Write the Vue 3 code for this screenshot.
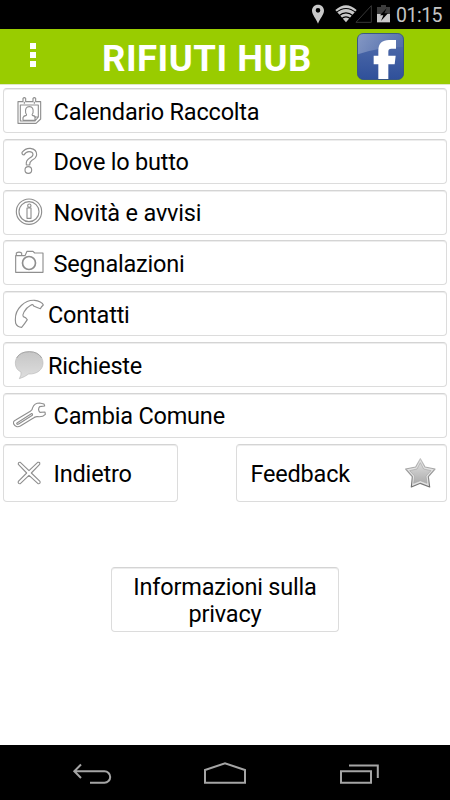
<script setup>
const items = [
  { icon: 'calendar', label: 'Calendario Raccolta', box: '39 204 102 132' },
  { icon: 'question', label: 'Dove lo butto', box: '39 12 102 132' },
  { icon: 'info', label: 'Novità e avvisi', box: '39 165 102 132' },
  { icon: 'camera', label: 'Segnalazioni', box: '39 18 102 132' },
  { icon: 'phone', label: 'Contatti', box: '39 170 102 132', tight: true },
  { icon: 'bubble', label: 'Richieste', box: '39 14 102 132', tight: true },
  { icon: 'wrench', label: 'Cambia Comune', box: '39 165 102 132' },
]
</script>

<template>
  <div class="screen">
    <div class="status">
      <svg class="status-icons" viewBox="30 0 250 84">
        <path fill="#c9c9c9" fill-rule="evenodd" d="M54 14c-11 0-18 8-18 18 0 12 13 24 18 39 5-15 18-27 18-39 0-10-7-18-18-18zm0 10a7 7 0 1 1 0 14 7 7 0 0 1 0-14z" />
        <path fill="#c9c9c9" d="M106 30Q138 2 170 30L138 67z" />
        <g fill="none" stroke="#000" stroke-width="3.5">
          <path d="M108 38Q138 13 168 38M116 48Q138 29 160 48M124 56Q138 45 152 56" />
        </g>
        <path fill="none" stroke="#424242" stroke-width="2.5" d="M168 67L214 17V67z" />
        <path fill="#3d3d3d" d="M243 15h15v6h12v24h-39V21h12z" />
        <path fill="#c9c9c9" d="M231 42h39v25h-39z" />
        <path fill="#000" d="M260 25L240 46h10L243 63L264 40h-11z" />
      </svg>
      <span class="clock">01:15</span>
    </div>

    <header class="bar">
      <div class="dots"><i></i><i></i><i></i></div>
      <h1>RIFIUTI HUB</h1>
      <svg class="fb" viewBox="0 0 141 141">
        <defs>
          <linearGradient id="fbg" x1="0" y1="0" x2="0" y2="1">
            <stop offset="0" stop-color="#5570ad" />
            <stop offset="1" stop-color="#2f509a" />
          </linearGradient>
          <linearGradient id="gloss" x1="0" y1="0" x2="1" y2="0">
            <stop offset="0" stop-color="#fff" stop-opacity=".28" />
            <stop offset="1" stop-color="#fff" stop-opacity=".04" />
          </linearGradient>
        </defs>
        <rect x="1.5" y="1.5" width="138" height="138" rx="17" fill="url(#fbg)" stroke="#2f4c8c" stroke-width="2.5" />
        <path fill="url(#gloss)" d="M3 19Q3 3 19 3H122Q138 3 138 19V42Q60 43 3 64z" />
        <path fill="#fff" d="M64 138V94H50V68H64V52C64 31 76 21 96 21H117V47H103C96 47 94 50 94 56V68H116L113 94H94V138z" />
      </svg>
    </header>

    <main>
      <nav class="menu">
        <button v-for="item in items" :key="item.icon" class="btn row" :class="{ tight: item.tight }">
          <svg class="icon" :viewBox="item.box">
            <g v-if="item.icon === 'calendar'" class="line">
              <path d="M54 242H69V232Q73 228 77 232V242H99V232Q103 228 107 232V242H122V294L108 307H54z" />
              <path d="M61 252H115V288H105V300H61zM73 242V248M103 242V248M105 300L115 288" />
              <path d="M69 298V290Q71 284 79 283Q81 281 77 276Q74 257 88 257Q102 257 99 276Q95 281 97 283Q105 284 107 290M69 298H105" />
            </g>
            <g v-else-if="item.icon === 'question'" class="line">
              <path d="M66 52Q76 39 91 40Q111 43 110 60Q108 70 96 76Q89 80 89 90H79Q77 77 88 70Q99 65 99 58Q98 50 87 50Q78 50 72 60Q65 59 66 52z" />
              <circle cx="85" cy="105" r="10" />
            </g>
            <g v-else-if="item.icon === 'info'" class="line">
              <circle cx="87" cy="230" r="38" />
              <circle cx="87" cy="230" r="30" />
              <circle cx="88" cy="212" r="5" />
              <path d="M81 219H93V250H81z" />
            </g>
            <g v-else-if="item.icon === 'camera'" class="line">
              <path d="M47 112V62H75L81 49H99L104 54H129V112zM49 62V54Q57 49 65 54V62M75 62H68" />
              <circle cx="87" cy="84" r="19.5" class="lens" />
            </g>
            <g v-else-if="item.icon === 'phone'" class="line">
              <path d="M46 253C45 219 76 193 104 195C116 196 128 203 130 209Q124 214 121 220Q108 216 101 212Q98 205 92 210Q79 217 72 230Q67 239 70 244Q78 246 82 253Q73 267 65 276Q52 276 47 264z" />
            </g>
            <g v-else-if="item.icon === 'bubble'">
              <defs>
                <linearGradient id="bub" x1="0" y1="0" x2="0" y2="1">
                  <stop offset="0" stop-color="#c6c6c6" />
                  <stop offset="1" stop-color="#dedede" />
                </linearGradient>
              </defs>
              <path fill="url(#bub)" stroke="#b9b9b9" stroke-width="2" d="M88 40C112 40 129 54 129 74C129 94 111 108 86 107Q74 116 58 121Q65 110 63 101C52 96 46 87 46 74C46 54 63 40 88 40z" />
              <path fill="none" stroke="#929292" stroke-width="2" d="M50 59Q60 40 88 40Q114 40 125 59" />
            </g>
            <g v-else class="line">
              <path d="M40 256Q39 250 47 246L91 220Q97 217 98 209Q103 195 119 195L132 198L134 204L119 206Q112 215 120 223L135 222L136 229Q128 238 113 236Q105 235 99 241L61 264Q48 271 40 256z" />
              <path d="M52 254L94 227Q99 226 97 232L57 257Q51 261 50 257z" />
            </g>
          </svg>
          <span>{{ item.label }}</span>
        </button>
      </nav>

      <div class="pair">
        <button class="btn back">
          <svg class="icon" viewBox="39 27 102 174">
            <path class="line" d="M61 82L87 107L113 82Q121 80 119 88L94 114L120 139Q122 147 114 146L87 121L61 146Q53 147 55 139L80 114L55 88Q54 81 61 82z" />
          </svg>
          <span>Indietro</span>
        </button>
        <button class="btn feedback">
          <span>Feedback</span>
          <svg class="star" viewBox="537 66 99 99">
            <defs>
              <linearGradient id="st" x1="0" y1="0" x2="0" y2="1">
                <stop offset="0" stop-color="#dcdcdc" />
                <stop offset="1" stop-color="#adadad" />
              </linearGradient>
              <linearGradient id="edge" x1="0" y1="0" x2="0" y2="1">
                <stop offset="0" stop-color="#c4c4c4" />
                <stop offset="1" stop-color="#6f6f6f" />
              </linearGradient>
            </defs>
            <path fill="#e2e2e2" stroke="url(#edge)" stroke-width="3.5" stroke-linejoin="round" d="M586 71L600 96L630 102L610 125L614 156L586 145L559 156L562 125L542 102L572 96z" />
            <path fill="url(#st)" stroke="#a8a8a8" stroke-width="2" stroke-linejoin="round" d="M586 83L596 102L618 107L603 123L606 145L586 137L566 145L569 123L554 107L576 102z" />
          </svg>
        </button>
      </div>

      <button class="btn privacy">Informazioni sulla<br />privacy</button>
    </main>

    <footer class="nav">
      <svg viewBox="0 0 450 55">
        <g fill="none" stroke="#a5a5a5" stroke-width="2">
          <path d="M81 19.5L74.3 26.3L81 33M75 26.3H104.5A5.7 5.7 0 0 1 104.5 37.7H90" />
          <path d="M205 37.8V25L225 18.4L245 25V37.8z" />
          <path d="M341 26.3H371V37.8H341zM349 20.5H377.8V33" />
        </g>
      </svg>
    </footer>
  </div>
</template>

<style>
body {
  margin: 0;
}
</style>

<style scoped>
.screen {
  width: 450px;
  height: 800px;
  display: flex;
  flex-direction: column;
  background: #fff;
  font-family: Roboto, sans-serif;
  color: #000;
  overflow: hidden;
}
.status {
  height: 29px;
  flex: none;
  background: #000;
  display: flex;
  align-items: flex-start;
  justify-content: flex-end;
  padding-right: 7px;
  box-sizing: border-box;
}
.status-icons {
  width: 83.33px;
  height: 28px;
  margin-right: 3px;
}
.clock {
  width: 47px;
  font-size: 19.5px;
  letter-spacing: -0.5px;
  line-height: 31px;
  color: #c4c4c4;
  white-space: nowrap;
}
.bar {
  height: 56px;
  flex: none;
  background: #9c0;
  border-bottom: 1px solid #dfe8c8;
  display: flex;
  align-items: flex-start;
  box-sizing: border-box;
}
.dots {
  width: 6px;
  margin: 14px 0 0 30px;
  display: flex;
  flex-direction: column;
  gap: 3px;
}
.dots i {
  height: 6px;
  background: #fff;
}
h1 {
  width: 215px;
  margin: 0 0 0 66px;
  font-size: 36.5px;
  letter-spacing: 0.5px;
  line-height: 59px;
  font-weight: 700;
  color: #fff;
  white-space: nowrap;
}
.fb {
  width: 47px;
  height: 47px;
  margin: 4px 0 0 40px;
}
main {
  flex: 1;
  display: flex;
  flex-direction: column;
  padding: 3px 3px 0;
}
.menu {
  display: flex;
  flex-direction: column;
  gap: 5.83px;
}
.btn {
  box-sizing: border-box;
  border: 1px solid #dcdcdc;
  border-top-color: #d4d4d4;
  border-radius: 4px;
  background: #fff;
  box-shadow: inset 0 1px 0 #ededed;
  padding: 0;
  font: 400 23.5px/27px Roboto, sans-serif;
  letter-spacing: -0.2px;
  color: #000;
  display: flex;
  align-items: center;
  white-space: nowrap;
}
.row {
  height: 45px;
  padding: 0 0 0 9px;
}
.icon {
  width: 34px;
  height: 44px;
  flex: none;
  margin-right: 6.6px;
}
.tight .icon {
  margin-right: 1px;
}
.row span {
  padding-top: 3px;
}
.line {
  fill: none;
  stroke: #8f8f8f;
  stroke-width: 3.4;
  stroke-linejoin: round;
}
.lens {
  stroke-width: 5;
}
.pair {
  margin-top: 6px;
  display: flex;
  justify-content: space-between;
}
.back,
.feedback {
  height: 58px;
}
.back {
  width: 175px;
  padding-left: 9px;
}
.back .icon {
  height: 58px;
}
.back span,
.feedback span {
  padding-top: 4px;
}
.feedback {
  width: 211px;
  justify-content: space-between;
  padding: 0 9px 0 13.5px;
}
.star {
  width: 33px;
  height: 33px;
  margin-top: 2px;
}
.privacy {
  width: 228px;
  height: 65px;
  margin: 65px 0 0 108px;
  padding-top: 4px;
  justify-content: center;
  text-align: center;
}
.nav {
  height: 55px;
  flex: none;
  background: #000;
}
.nav svg {
  display: block;
  width: 450px;
  height: 55px;
}
</style>
